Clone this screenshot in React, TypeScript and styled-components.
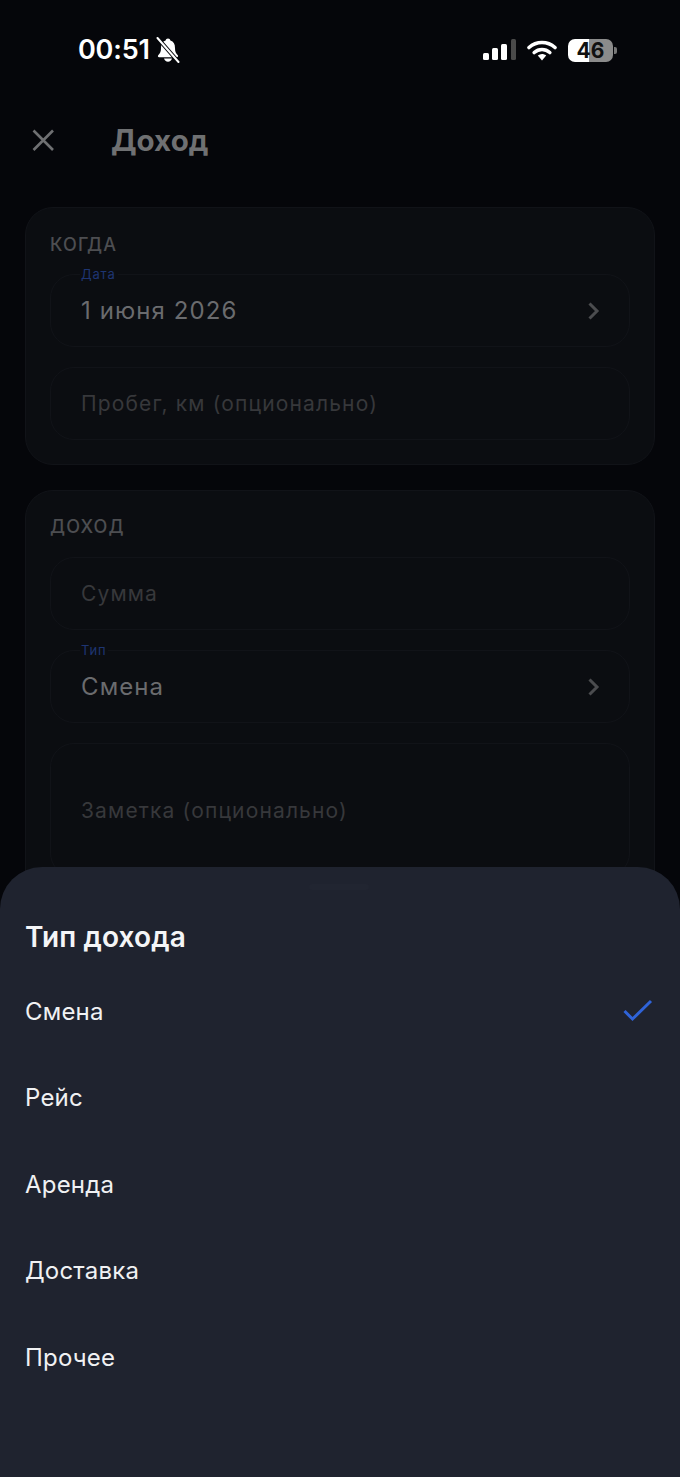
import React from "react";
import styled, { createGlobalStyle } from "styled-components";

const Global = createGlobalStyle`
  html, body { margin: 0; padding: 0; background: #05060a; }
  * { box-sizing: border-box; }
`;

const Page = styled.div`
  position: relative;
  width: 680px;
  height: 1477px;
  overflow: hidden;
  background: #05060a;
  font-family: Inter, "Liberation Sans", sans-serif;
`;

const StatusBar = styled.div`
  height: 100px;
  display: flex;
  align-items: center;
  justify-content: space-between;
  padding: 0 67px 0 78px;
  color: #fff;
`;

const TimeGroup = styled.div`
  display: flex;
  align-items: center;
  gap: 6px;
`;

const Time = styled.span`
  font-size: 27px;
  font-weight: 600;
  letter-spacing: -0.2px;
  line-height: 32px;
`;

const Indicators = styled.div`
  display: flex;
  align-items: center;
  gap: 11px;
`;

const Battery = styled.div`
  position: relative;
  width: 45px;
  height: 23px;
  border-radius: 7px;
  background: linear-gradient(90deg, #fff 46%, #8b8b8b 46%);
  display: flex;
  align-items: center;
  justify-content: center;
  color: #111;
  font-size: 21px;
  font-weight: 700;
  line-height: 23px;
`;

const BatteryNub = styled.span`
  position: absolute;
  right: -4px;
  top: 8px;
  width: 3px;
  height: 7px;
  border-radius: 0 2px 2px 0;
  background: #777;
`;

const Header = styled.div`
  height: 80px;
  display: flex;
  align-items: center;
  padding-left: 30px;
  gap: 55px;
  color: #707070;
`;

const Title = styled.h1`
  margin: 0;
  font-size: 29.5px;
  font-weight: 700;
  color: #6f7072;
`;

const Form = styled.div`
  margin-top: 27px;
  padding: 0 25px;
  display: flex;
  flex-direction: column;
  gap: 25px;
`;

const Card = styled.section`
  border: 1px solid #111318;
  border-radius: 28px;
  background: #0b0d11;
  padding: 23px 24px 24px;
  display: flex;
  flex-direction: column;
`;

const SectionLabel = styled.div<{ $nudge?: number }>`
  font-size: 18px;
  font-weight: 500;
  letter-spacing: 1.2px;
  line-height: 26px;
  color: #4d4e51;
  text-transform: uppercase;
  margin-top: ${(p) => p.$nudge ?? 0}px;
  margin-bottom: ${(p) => 17 - (p.$nudge ?? 0)}px;
`;

const Fields = styled.div`
  display: flex;
  flex-direction: column;
  gap: 20px;
`;

const Field = styled.div<{ $tall?: boolean }>`
  position: relative;
  height: ${(p) => (p.$tall ? "134px" : "73px")};
  border: 1px solid #111318;
  border-radius: 24px;
  padding: 0 28px 0 30px;
  display: flex;
  align-items: center;
  justify-content: space-between;
`;

const FloatLabel = styled.span`
  position: absolute;
  left: 29px;
  top: -9px;
  padding: 0 2px 0 1px;
  background: #0b0d11;
  font-size: 13px;
  line-height: 16px;
  letter-spacing: 0.8px;
  color: #1e3572;
`;

const Value = styled.span`
  font-size: 24px;
  letter-spacing: 1.1px;
  color: #6a6b6e;
`;

const Placeholder = styled.span`
  font-size: 21px;
  letter-spacing: 1.15px;
  color: #37383b;
`;

const Sheet = styled.div`
  position: absolute;
  left: 0;
  right: 0;
  top: 867px;
  bottom: 0;
  background: #1f232f;
  border-radius: 42px 42px 0 0;
  padding: 0 27px 0 25px;
`;

const Handle = styled.div`
  width: 60px;
  height: 6px;
  margin: 17px auto 0;
  border-radius: 3px;
  background: #212531;
`;

const SheetTitle = styled.h2`
  margin: 30px 0 0;
  font-size: 28px;
  font-weight: 600;
  line-height: 34px;
  letter-spacing: 0.12px;
  color: #f4f5f7;
`;

const Options = styled.div`
  margin-top: 14px;
  display: flex;
  flex-direction: column;
`;

const Option = styled.div`
  height: 86.5px;
  display: flex;
  align-items: center;
  justify-content: space-between;
  font-size: 24px;
  letter-spacing: 0.2px;
  color: #f0f1f3;
`;

const BellOff = () => (
  <svg width="24" height="26" viewBox="0 0 24 26" fill="none">
    <path d="M12 1.500c-1.300 0-2.200.9-2.400 2C6.300 4.500 5 7.200 5 11c0 3.600-.8 5.300-2.800 7.200-.7.800-.2 2 .9 2h17.800c1.100 0 1.600-1.200.9-2-2-1.900-2.800-3.600-2.800-7.200 0-3.800-1.300-6.500-4.600-7.500-.2-1.100-1.100-2-2.400-2Z" fill="#fff" />
    <path d="M8 21.500h8c-.5 2-2 3.200-4 3.200s-3.500-1.200-4-3.200Z" fill="#fff" />
    <path d="M1.500 1 22.500 25" stroke="#05060a" strokeWidth="4" />
    <path d="M1.500 1 22.500 25" stroke="#fff" strokeWidth="2" strokeLinecap="round" />
  </svg>
);

const Signal = () => (
  <svg width="33" height="22" viewBox="0 0 33 22" fill="none">
    <rect x="0" y="14" width="6" height="7" rx="1.500" fill="#fff" />
    <rect x="9" y="9" width="6" height="12" rx="1.500" fill="#fff" />
    <rect x="18" y="5" width="6" height="16" rx="1.500" fill="#fff" />
    <rect x="28" y="0" width="5" height="21" rx="1.500" fill="#4a4a4a" />
  </svg>
);

const Wifi = () => (
  <svg width="30" height="21" viewBox="0 0 30 21" fill="none">
    <path d="M2 7.500C9.500.800 20.500.800 28 7.500" stroke="#fff" strokeWidth="3.600" strokeLinecap="round" />
    <path d="M7.200 12.500c4.600-4 11-4 15.600 0" stroke="#fff" strokeWidth="3.600" strokeLinecap="round" />
    <path d="M10.800 15.400c2.600-2 5.800-2 8.400 0L15 20.500Z" fill="#fff" />
  </svg>
);

const CloseIcon = () => (
  <svg width="26" height="26" viewBox="0 0 26 26" fill="none">
    <path d="M3.500 3.500 23 23M23 3.500 3.500 23" stroke="#6f7072" strokeWidth="2.600" />
  </svg>
);

const Chevron = () => (
  <svg width="14" height="20" viewBox="0 0 14 20" fill="none">
    <path d="M2.500 2.500 10 10l-7.500 7.500" stroke="#4b4c4f" strokeWidth="3" />
  </svg>
);

const Check = () => (
  <svg width="30" height="24" viewBox="0 0 30 24" fill="none">
    <path d="M1.500 12 9.500 20 28 2" stroke="#2f63d8" strokeWidth="3" />
  </svg>
);

const options = ["Смена", "Рейс", "Аренда", "Доставка", "Прочее"];

export default function App() {
  return (
    <Page>
      <Global />
      <StatusBar>
        <TimeGroup>
          <Time>00:51</Time>
          <BellOff />
        </TimeGroup>
        <Indicators>
          <Signal />
          <Wifi />
          <Battery>
            46
            <BatteryNub />
          </Battery>
        </Indicators>
      </StatusBar>
      <Header>
        <CloseIcon />
        <Title>Доход</Title>
      </Header>
      <Form>
        <Card>
          <SectionLabel $nudge={1}>Когда</SectionLabel>
          <Fields>
            <Field>
              <FloatLabel>Дата</FloatLabel>
              <Value>1 июня 2026</Value>
              <Chevron />
            </Field>
            <Field>
              <Placeholder>Пробег, км (опционально)</Placeholder>
            </Field>
          </Fields>
        </Card>
        <Card>
          <SectionLabel>Доход</SectionLabel>
          <Fields>
            <Field>
              <Placeholder>Сумма</Placeholder>
            </Field>
            <Field>
              <FloatLabel>Тип</FloatLabel>
              <Value>Смена</Value>
              <Chevron />
            </Field>
            <Field $tall>
              <Placeholder>Заметка (опционально)</Placeholder>
            </Field>
          </Fields>
        </Card>
      </Form>
      <Sheet>
        <Handle />
        <SheetTitle>Тип дохода</SheetTitle>
        <Options>
          {options.map((o, i) => (
            <Option key={o}>
              {o}
              {i === 0 && <Check />}
            </Option>
          ))}
        </Options>
      </Sheet>
    </Page>
  );
}
